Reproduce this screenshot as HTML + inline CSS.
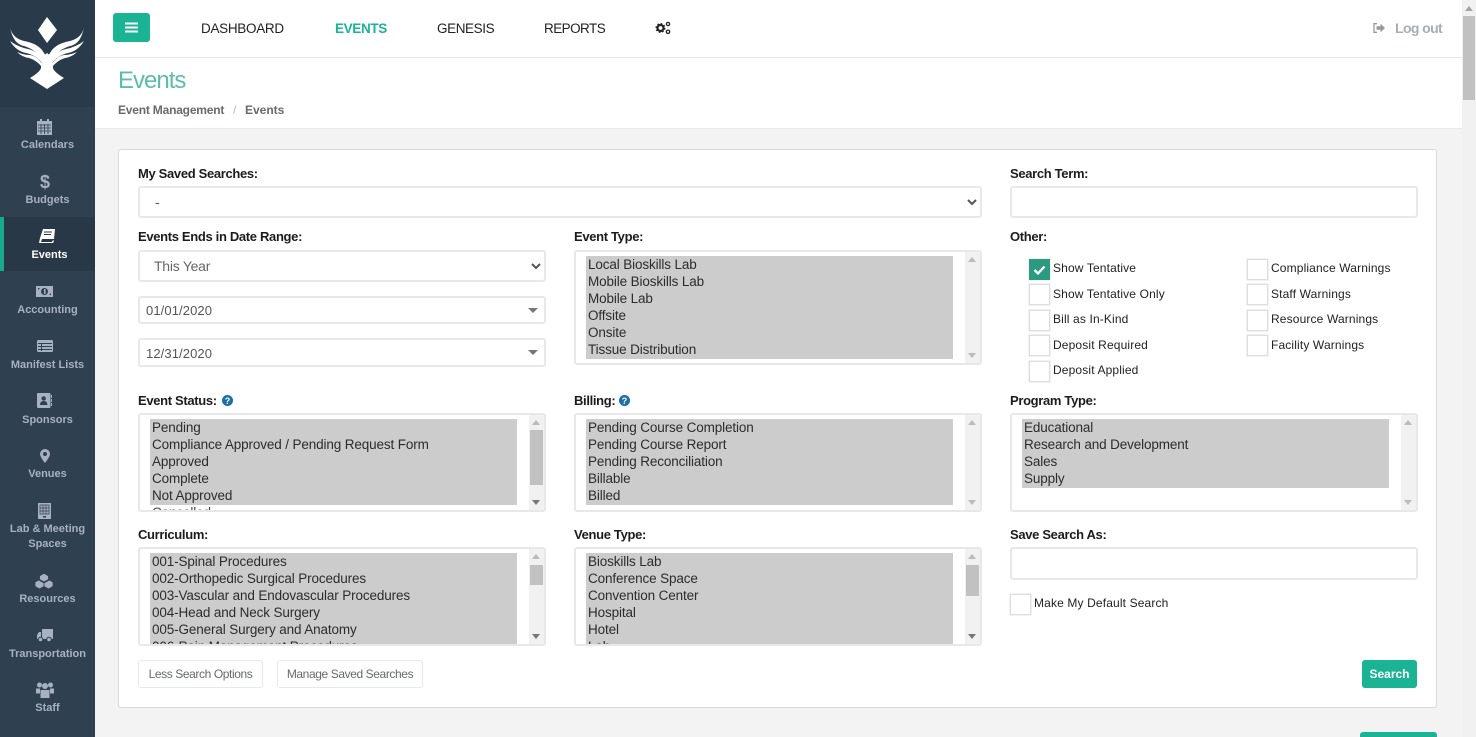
<!DOCTYPE html>
<html><head><meta charset="utf-8"><title>Events</title>
<style>
html,body{margin:0;padding:0;width:1476px;height:737px;overflow:hidden;background:#f3f3f4;font-family:"Liberation Sans",sans-serif;color:#222}
#a{position:relative;width:1476px;height:737px;overflow:hidden}
#a div,#a span.t,#a svg.p{position:absolute}
.t{white-space:nowrap;line-height:16px}
.lb{font-weight:bold;font-size:13px;color:#1c1c1c;letter-spacing:-.33px}
.side{width:95px;text-align:center;font-size:11px;font-weight:bold;color:#a7b1c2;line-height:15px;left:0}
.ms{background:#fff;border:2px solid #e8e8e8;border-radius:3px;box-sizing:border-box;overflow:hidden}
.sel{left:10px;top:4px;background:#ccc;font-size:13.5px;line-height:17px;color:#2c2c2c;padding-left:2px;box-sizing:border-box;white-space:nowrap;letter-spacing:-.13px}
.sb{right:0;top:0;bottom:0;width:15px;background:#f1f1f1}
.up{left:3px;top:5px;width:0;height:0;border:4px solid transparent;border-top:0;border-bottom:5px solid #bbb}
.dn{left:3px;bottom:5px;width:0;height:0;border:4px solid transparent;border-bottom:0;border-top:5px solid #777}
.dg{bottom:5px;left:3px;width:0;height:0;border:4px solid transparent;border-bottom:0;border-top:5px solid #bbb}
.th{left:1px;width:13px;background:#c1c1c1}
.cb{width:21px;height:21px;background:#fff;border:1px solid #ddd;box-sizing:border-box;box-shadow:0 0 0 .5px #e6e6e6}
.cl{font-size:12px;color:#222;letter-spacing:.14px}
.nav{font-size:13.5px;color:#222;top:21px;letter-spacing:-.3px}
.ar{width:0;height:0;border:5px solid transparent;border-bottom:0;border-top:5px solid #777}
.chev{fill:none;stroke:#555;stroke-width:2}
.btn{background:#fff;border:1px solid #e7eaec;border-radius:3px;box-sizing:border-box;font-size:12px;color:#676a6c;text-align:center;line-height:26px;white-space:nowrap;letter-spacing:-.4px}
</style></head><body><div id="a">

<!-- sidebar -->
<div style="left:0;top:0;width:95px;height:737px;background:#2f4050"></div>
<div style="left:0;top:0;width:95px;height:107px;background:#293b4b"></div>
<div style="left:0;top:217px;width:95px;height:54px;background:#293846"></div>
<div style="left:0;top:217px;width:4px;height:54px;background:#19aa8d"></div>

<svg class="p" style="left:0;top:0" width="95" height="107" viewBox="0 0 95 107">
<path fill="#fff" d="M47 17 L57 30 L47 43 L38 30Z"/>
<path fill="#fff" d="M42 57 L47 53 L52 57 L53 68 Q54 72 64 78 L47 89 L30 78 Q40 72 41 68Z"/>
<path fill="#fff" d="M10 27 Q12 38 24 41 Q36 43 42 50 L46 56 L46 66 Q38 50 24 46 Q13 44 10 27Z"/>
<path fill="#fff" d="M10 41 Q18 47 28 49 Q38 51 44 62 L43 64 Q36 55 26 53 Q16 51 10 41Z"/>
<path fill="#fff" d="M17 52 Q24 55 30 55 Q37 56 43 65 L42 67 Q36 60 29 58 Q22 57 17 52Z"/>
<path fill="#fff" d="M84 27 Q82 38 70 41 Q58 43 52 50 L48 56 L48 66 Q56 50 70 46 Q81 44 84 27Z"/>
<path fill="#fff" d="M84 41 Q76 47 66 49 Q56 51 50 62 L51 64 Q58 55 68 53 Q78 51 84 41Z"/>
<path fill="#fff" d="M77 52 Q70 55 64 55 Q57 56 51 65 L52 67 Q58 60 65 58 Q72 57 77 52Z"/>
</svg>

<!-- sidebar icons -->
<svg class="p" style="left:37px;top:119px" width="15" height="16" viewBox="0 0 15 16"><path fill="#a7b1c2" d="M3 0h2v2h5V0h2v2h3v14H0V2h3z"/><path stroke="#2f4050" stroke-width=".8" fill="none" d="M1 6h13M1 9h13M1 12h13M4 5v10M7.500 5v10M11 5v10"/></svg>
<span class="t" style="left:40px;top:172px;font-size:18px;font-weight:bold;color:#a7b1c2;line-height:20px">$</span>
<svg class="p" style="left:39px;top:229px" width="16" height="14" viewBox="0 0 16 14"><path fill="#fff" d="M4 0h12l-1 10H3L2 13h11l1-2 1 1-1 2H0L1 9z"/><path stroke="#293846" d="M5 3h8M5 5.500h7"/></svg>
<svg class="p" style="left:36px;top:286px" width="17" height="11" viewBox="0 0 17 11"><path fill="#a7b1c2" d="M0 0h17v11H0z"/><circle cx="8.500" cy="5.500" r="3.500" fill="#2f4050"/><path d="M8 3h1.500v5H8z" fill="#a7b1c2"/><path d="M2 2h2L2 4zM15 9h-2l2-2z" fill="#2f4050"/></svg>
<svg class="p" style="left:37px;top:340px" width="16" height="12" viewBox="0 0 16 12"><rect width="16" height="12" rx="1.500" fill="#a7b1c2"/><path stroke="#2f4050" d="M1 3.500h14M1 6.500h14M1 9.500h14M4.500 3v8"/></svg>
<svg class="p" style="left:37px;top:393px" width="15" height="15" viewBox="0 0 15 15"><rect width="13.500" height="15" rx="1" fill="#a7b1c2"/><path fill="#a7b1c2" d="M14 2h1v3h-1zM14 6h1v3h-1zM14 10h1v3h-1z"/><circle cx="6.700" cy="5.500" r="2.200" fill="#2f4050"/><path fill="#2f4050" d="M3 12q0-4 3.700-4t3.700 4z"/></svg>
<svg class="p" style="left:40px;top:449px" width="10" height="14" viewBox="0 0 10 14"><path fill="#a7b1c2" fill-rule="evenodd" d="M5 0a5 5 0 0 1 5 5c0 3-5 9-5 9S0 8 0 5a5 5 0 0 1 5-5zm0 3a2 2 0 1 0 0 4 2 2 0 0 0 0-4z"/></svg>
<svg class="p" style="left:38px;top:503px" width="13" height="16" viewBox="0 0 13 16"><rect width="13" height="16" fill="#a7b1c2"/><path stroke="#2f4050" stroke-width=".7" fill="none" d="M2 2h9v9H2zM2 5h9M2 8h9M5 2v9M8 2v9"/><path fill="#2f4050" d="M5 13h3v1.500H5z"/></svg>
<svg class="p" style="left:34px;top:573px" width="20" height="16" viewBox="0 0 20 16"><path fill="#a7b1c2" stroke="#2f4050" stroke-width=".8" d="M5.500 3 10 0l4.500 3v4.500L10 10 5.500 7.500zM1 9l4.500-2.500L10 9v4.500L5.500 16 1 13.500zM10 9l4.500-2.500L19 9v4.500L14.500 16 10 13.500z"/></svg>
<svg class="p" style="left:37px;top:629px" width="16" height="13" viewBox="0 0 16 13"><path fill="#a7b1c2" d="M5 0h11v10H5zM4 3v7H0V6l2-3z"/><circle cx="3.500" cy="10.500" r="2.300" fill="#a7b1c2" stroke="#2f4050"/><circle cx="12" cy="10.500" r="2.300" fill="#a7b1c2" stroke="#2f4050"/></svg>
<svg class="p" style="left:36px;top:682px" width="18" height="16" viewBox="0 0 18 16"><g fill="#a7b1c2"><circle cx="3.500" cy="3" r="2.500"/><circle cx="14.500" cy="3" r="2.500"/><circle cx="9" cy="4" r="3"/><path d="M0 6.500h4v5H0zM14 6.500h4v5h-4zM4.500 8h9v8h-9z"/></g></svg>

<div class="side" style="top:138px">Calendars</div>
<div class="side" style="top:193px">Budgets</div>
<div class="side" style="top:248px;color:#fff;left:2px">Events</div>
<div class="side" style="top:303px">Accounting</div>
<div class="side" style="top:358px">Manifest Lists</div>
<div class="side" style="top:413px">Sponsors</div>
<div class="side" style="top:467px">Venues</div>
<div class="side" style="top:522px">Lab &amp; Meeting<br>Spaces</div>
<div class="side" style="top:592px">Resources</div>
<div class="side" style="top:647px">Transportation</div>
<div class="side" style="top:701px">Staff</div>

<!-- top bar -->
<div style="left:95px;top:0;width:1367px;height:58px;background:#fff;border-bottom:1px solid #e7eaec;box-sizing:border-box"></div>
<div style="left:113px;top:13px;width:37px;height:29px;background:#1ab394;border-radius:3px"></div>
<svg class="p" style="left:125px;top:22px" width="13" height="11" viewBox="0 0 13 11"><path stroke="#fff" stroke-width="2" d="M0 1.500h13M0 5.500h13M0 9.500h13"/></svg>
<span class="t nav" style="left:201px">DASHBOARD</span>
<span class="t nav" style="left:335px;color:#1ab394;font-weight:bold;letter-spacing:-.35px">EVENTS</span>
<span class="t nav" style="left:437px;letter-spacing:-.4px">GENESIS</span>
<span class="t nav" style="left:544px;letter-spacing:-.55px">REPORTS</span>
<svg class="p" style="left:655px;top:21px" width="16" height="15" viewBox="0 0 16 15"><circle cx="5.500" cy="7" r="3" fill="none" stroke="#222" stroke-width="2.200"/><circle cx="5.500" cy="7" r="4.400" fill="none" stroke="#222" stroke-width="1.200" stroke-dasharray="1.700 1.750"/><circle cx="13" cy="3" r="1.600" fill="none" stroke="#222" stroke-width="1.300"/><circle cx="13" cy="10.800" r="1.700" fill="none" stroke="#222" stroke-width="1.300"/></svg>
<svg class="p" style="left:1373px;top:23px" width="12" height="10" viewBox="0 0 12 10"><path fill="none" stroke="#999" stroke-width="1.300" d="M4 .7H1v8.600h3"/><path fill="#999" d="M3.500 3.200h4V.6L12 5 7.500 9.400V6.800h-4z"/></svg>
<span class="t" style="left:1395px;top:20px;font-size:14px;font-weight:bold;color:#a7adb5;letter-spacing:-.6px">Log out</span>

<!-- heading -->
<div style="left:95px;top:58px;width:1367px;height:71px;background:#fff;border-bottom:1px solid #e7eaec;box-sizing:border-box"></div>
<span class="t" style="left:118px;top:67px;font-size:24px;line-height:28px;color:#5cbdac;font-weight:normal;letter-spacing:-1px">Events</span>
<span class="t" style="left:118px;top:102px;font-size:12px;font-weight:bold;color:#676a6c;letter-spacing:-.2px">Event Management</span>
<span class="t" style="left:233px;top:102px;font-size:12px;color:#bbb">/</span>
<span class="t" style="left:245px;top:102px;font-size:12px;font-weight:bold;color:#676a6c">Events</span>

<!-- panel -->
<div style="left:118px;top:149px;width:1319px;height:559px;background:#fff;border:1px solid #d8d8d8;border-radius:3px;box-sizing:border-box"></div>

<span class="t lb" style="left:138px;top:166px">My Saved Searches:</span>
<span class="t lb" style="left:1010px;top:166px">Search Term:</span>
<div class="ms" style="left:138px;top:186px;width:844px;height:32px"></div>
<span class="t" style="left:155px;top:194px;font-size:14px;color:#555">-</span>
<svg class="p" style="left:967px;top:199px" width="10" height="7" viewBox="0 0 10 7"><path class="chev" d="M1 1l4 4 4-4"/></svg>
<div class="ms" style="left:1010px;top:186px;width:408px;height:32px"></div>

<span class="t lb" style="left:138px;top:229px">Events Ends in Date Range:</span>
<span class="t lb" style="left:574px;top:229px">Event Type:</span>
<span class="t lb" style="left:1010px;top:229px">Other:</span>

<div class="ms" style="left:138px;top:250px;width:408px;height:32px"></div>
<span class="t" style="left:154px;top:258px;font-size:14px;color:#666;letter-spacing:-.25px">This Year</span>
<svg class="p" style="left:531px;top:263px" width="10" height="7" viewBox="0 0 10 7"><path class="chev" d="M1 1l4 4 4-4"/></svg>
<div class="ms" style="left:138px;top:296px;width:408px;height:28px"></div>
<span class="t" style="left:146px;top:303px;font-size:13px;color:#555;letter-spacing:.1px">01/01/2020</span>
<div class="ar" style="left:528px;top:308px"></div>
<div class="ms" style="left:138px;top:338px;width:408px;height:29px"></div>
<span class="t" style="left:146px;top:346px;font-size:13px;color:#555;letter-spacing:.1px">12/31/2020</span>
<div class="ar" style="left:528px;top:350px"></div>

<!-- Event Type -->
<div class="ms" style="left:574px;top:250px;width:408px;height:115px">
  <div class="sel" style="width:367px;height:103px">Local Bioskills Lab<br>Mobile Bioskills Lab<br>Mobile Lab<br>Offsite<br>Onsite<br>Tissue Distribution</div>
  <div class="sb"><div class="up"></div><div class="dg"></div></div>
</div>

<!-- checkboxes -->
<div class="cb" style="left:1029px;top:259px;background:#2a9a80;border-color:#2a9a80"></div>
<svg class="p" style="left:1033px;top:265px" width="13" height="10" viewBox="0 0 13 10"><path d="M1.500 5l3.500 3.500L11.500 1.500" fill="none" stroke="#fff" stroke-width="2.300"/></svg>
<div class="cb" style="left:1029px;top:284px"></div>
<div class="cb" style="left:1029px;top:310px"></div>
<div class="cb" style="left:1029px;top:335px"></div>
<div class="cb" style="left:1029px;top:361px"></div>
<div class="cb" style="left:1247px;top:259px"></div>
<div class="cb" style="left:1247px;top:284px"></div>
<div class="cb" style="left:1247px;top:310px"></div>
<div class="cb" style="left:1247px;top:335px"></div>
<span class="t cl" style="left:1053px;top:260px">Show Tentative</span>
<span class="t cl" style="left:1053px;top:286px">Show Tentative Only</span>
<span class="t cl" style="left:1053px;top:311px">Bill as In-Kind</span>
<span class="t cl" style="left:1053px;top:337px">Deposit Required</span>
<span class="t cl" style="left:1053px;top:362px">Deposit Applied</span>
<span class="t cl" style="left:1271px;top:260px">Compliance Warnings</span>
<span class="t cl" style="left:1271px;top:286px">Staff Warnings</span>
<span class="t cl" style="left:1271px;top:311px">Resource Warnings</span>
<span class="t cl" style="left:1271px;top:337px">Facility Warnings</span>

<!-- row 3 -->
<span class="t lb" style="left:138px;top:393px">Event Status:</span>
<svg class="p" style="left:222px;top:395px" width="11" height="11" viewBox="0 0 11 11"><circle cx="5.500" cy="5.500" r="5.500" fill="#1c6ea8"/><text x="5.500" y="9" text-anchor="middle" font-size="9" font-weight="bold" fill="#fff" font-family="Liberation Sans">?</text></svg>
<span class="t lb" style="left:574px;top:393px">Billing:</span>
<svg class="p" style="left:619px;top:395px" width="11" height="11" viewBox="0 0 11 11"><circle cx="5.500" cy="5.500" r="5.500" fill="#1c6ea8"/><text x="5.500" y="9" text-anchor="middle" font-size="9" font-weight="bold" fill="#fff" font-family="Liberation Sans">?</text></svg>
<span class="t lb" style="left:1010px;top:393px">Program Type:</span>

<div class="ms" style="left:138px;top:413px;width:408px;height:99px">
  <div class="sel" style="width:367px;height:86px">Pending<br>Compliance Approved / Pending Request Form<br>Approved<br>Complete<br>Not Approved</div>
  <span class="t" style="left:12px;top:89px;font-size:13.5px;line-height:17px;color:#444;letter-spacing:-.13px">Cancelled</span>
  <div class="sb"><div class="up"></div><div class="th" style="top:15px;height:55px"></div><div class="dn"></div></div>
</div>
<div class="ms" style="left:574px;top:413px;width:408px;height:99px">
  <div class="sel" style="width:367px;height:86px">Pending Course Completion<br>Pending Course Report<br>Pending Reconciliation<br>Billable<br>Billed</div>
  <div class="sb"><div class="up"></div><div class="dg"></div></div>
</div>
<div class="ms" style="left:1010px;top:413px;width:408px;height:99px">
  <div class="sel" style="width:367px;height:69px">Educational<br>Research and Development<br>Sales<br>Supply</div>
  <div class="sb"><div class="up"></div><div class="dg"></div></div>
</div>

<!-- row 4 -->
<span class="t lb" style="left:138px;top:527px">Curriculum:</span>
<span class="t lb" style="left:574px;top:527px">Venue Type:</span>
<span class="t lb" style="left:1010px;top:527px">Save Search As:</span>

<div class="ms" style="left:138px;top:547px;width:408px;height:99px">
  <div class="sel" style="width:367px;height:93px">001-Spinal Procedures<br>002-Orthopedic Surgical Procedures<br>003-Vascular and Endovascular Procedures<br>004-Head and Neck Surgery<br>005-General Surgery and Anatomy<br>006-Pain Management Procedures</div>
  <div class="sb"><div class="up"></div><div class="th" style="top:16px;height:20px"></div><div class="dn"></div></div>
</div>
<div class="ms" style="left:574px;top:547px;width:408px;height:99px">
  <div class="sel" style="width:367px;height:93px">Bioskills Lab<br>Conference Space<br>Convention Center<br>Hospital<br>Hotel<br>Lab</div>
  <div class="sb"><div class="up"></div><div class="th" style="top:16px;height:31px"></div><div class="dn"></div></div>
</div>
<div class="ms" style="left:1010px;top:547px;width:408px;height:33px"></div>
<div class="cb" style="left:1010px;top:594px"></div>
<span class="t cl" style="left:1034px;top:595px">Make My Default Search</span>

<!-- buttons -->
<div class="btn" style="left:138px;top:660px;width:125px;height:28px">Less Search Options</div>
<div class="btn" style="left:277px;top:660px;width:146px;height:28px">Manage Saved Searches</div>
<div style="left:1362px;top:660px;width:55px;height:28px;background:#1ab394;border-radius:3px;color:#fff;font-size:12px;font-weight:bold;text-align:center;line-height:28px">Search</div>
<div style="left:1360px;top:732px;width:77px;height:10px;background:#1ab394;border-radius:3px"></div>

<!-- page scrollbar -->
<div style="left:1462px;top:0;width:14px;height:737px;background:#f1f1f1"></div>
<div style="left:1463px;top:16px;width:12px;height:84px;background:#c1c1c1"></div>
<div style="left:1465px;top:6px;width:0;height:0;border:4px solid transparent;border-top:0;border-bottom:5px solid #a3a3a3"></div>

</div></body></html>
